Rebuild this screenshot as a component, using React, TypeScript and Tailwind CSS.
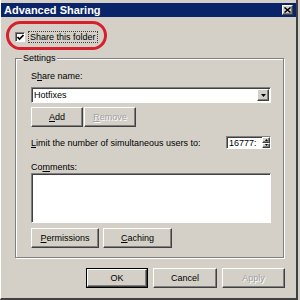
import React from "react";

const raised =
  "border border-t-white border-l-white border-r-[#404040] border-b-[#404040] shadow-[inset_-1px_-1px_0_#808080] bg-[#d4d0c8]";
const sunken =
  "border border-t-[#808080] border-l-[#808080] border-r-white border-b-white shadow-[inset_1px_1px_0_#404040] bg-white";

function Btn({ children, w, disabled, def }: { children: React.ReactNode; w: string; disabled?: boolean; def?: boolean }) {
  return (
    <div className={`${w} h-[20px] ${def ? "border border-black" : ""} flex`}>
      <div className={`flex-1 ${raised} flex items-center justify-center ${disabled ? "text-[#a0a0a0] [text-shadow:1px_1px_0_#fff]" : "text-black"}`}>
        {children}
      </div>
    </div>
  );
}

export default function App() {
  return (
    <div className="w-[300px] h-[300px] bg-[#d4d0c8] overflow-hidden text-[9px] leading-[10px] text-black" style={{ fontFamily: '"Liberation Sans", Arial, sans-serif' }}>
      <div className="w-[298px] h-[300px] border-l border-l-white border-r-2 border-r-[#404040] border-b-2 border-b-[#404040] flex flex-col relative">
        <div className="mt-[3px] h-[14px] bg-[#0a246a] flex items-center justify-between pl-[3px] pr-[3px]">
          <span className="text-white font-bold text-[11px] leading-[12px]">Advanced Sharing</span>
          <div className={`w-[11px] h-[10px] ${raised} flex items-center justify-center`}>
            <svg width="7" height="6" viewBox="0 0 7 6"><path d="M0.5 0.5 L6.5 5.5 M6.5 0.5 L0.5 5.5" stroke="#000" strokeWidth="1.5" /></svg>
          </div>
        </div>

        {/* red annotation */}
        <div className="absolute left-[5px] top-[21px] w-[101px] h-[29px] rounded-[15px] border-[3px] border-[#d6202c]" />

        <div className="mt-[14px] ml-[14px] flex items-center h-[12px]">
          <div className={`w-[10px] h-[10px] ${sunken} flex items-center justify-center`}>
            <svg width="7" height="7" viewBox="0 0 7 7"><path d="M0.5 3 L2.5 5 L6.5 1" stroke="#000" strokeWidth="1.6" fill="none" /></svg>
          </div>
          <span className="ml-[3px] px-[1px] border border-dotted border-[#404040]">Share this folder</span>
        </div>

        <div className="relative mt-[15px] ml-[14px] w-[269px] h-[200px] border border-[#808080] shadow-[inset_1px_1px_0_#fff,1px_1px_0_#fff] pl-[15px] pt-[12px]">
          <span className="absolute left-[6px] -top-[6px] bg-[#d4d0c8] px-[1px]">Settings</span>
          <div className="h-[12px]">S<u>h</u>are name:</div>
          <div className={`mt-[4px] w-[240px] h-[16px] ${sunken} flex items-center`}>
            <span className="pl-[2px] flex-1">Hotfixes</span>
            <div className={`w-[12px] h-[12px] mr-[1px] ${raised} flex items-center justify-center`}>
              <svg width="5" height="3" viewBox="0 0 5 3"><path d="M0 0 H5 L2.5 3 Z" fill="#000" /></svg>
            </div>
          </div>
          <div className="mt-[4px] flex">
            <Btn w="w-[52px]"><u>A</u>dd</Btn>
            <div className="ml-[1px]" />
            <Btn w="w-[52px]" disabled><u>R</u>emove</Btn>
          </div>
          <div className="mt-[9px] flex items-center w-[240px] h-[13px] justify-between">
            <span><u>L</u>imit the number of simultaneous users to:</span>
            <div className={`w-[45px] h-[13px] ${sunken} flex items-center`}>
              <span className="pl-[2px] flex-1 overflow-hidden">16777:</span>
              <div className="w-[8px] h-full flex flex-col">
                <div className={`flex-1 ${raised} flex items-center justify-center`}>
                  <svg width="3" height="2" viewBox="0 0 3 2"><path d="M0 2 H3 L1.5 0 Z" fill="#000" /></svg>
                </div>
                <div className={`flex-1 ${raised} flex items-center justify-center`}>
                  <svg width="3" height="2" viewBox="0 0 3 2"><path d="M0 0 H3 L1.5 2 Z" fill="#000" /></svg>
                </div>
              </div>
            </div>
          </div>
          <div className="mt-[13px] h-[11px]">Co<u>m</u>ments:</div>
          <div className={`w-[240px] h-[50px] ${sunken}`} />
          <div className="mt-[5px] flex">
            <Btn w="w-[68px]"><u>P</u>ermissions</Btn>
            <div className="ml-[4px]" />
            <Btn w="w-[69px]"><u>C</u>aching</Btn>
          </div>
        </div>

        <div className="mt-[10px] flex justify-end pr-[11px] gap-[5px]">
          <Btn w="w-[62px]" def>OK</Btn>
          <Btn w="w-[64px]">Cancel</Btn>
          <Btn w="w-[63px]" disabled>Apply</Btn>
        </div>
      </div>
    </div>
  );
}
